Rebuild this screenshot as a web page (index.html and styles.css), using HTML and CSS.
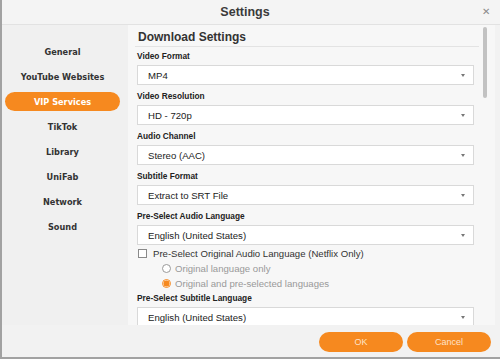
FILE: index.html
```html
<!DOCTYPE html>
<html>
<head>
<meta charset="utf-8">
<link rel="stylesheet" href="styles.css">
</head>
<body>
<div class="window">
  <div class="titlebar">
    <span class="title">Settings</span>
    <span class="close">&#x2715;</span>
  </div>
  <div class="main">
    <nav class="sidebar">
      <div class="nav-item">General</div>
      <div class="nav-item">YouTube Websites</div>
      <div class="nav-item active">VIP Services</div>
      <div class="nav-item">TikTok</div>
      <div class="nav-item">Library</div>
      <div class="nav-item">UniFab</div>
      <div class="nav-item">Network</div>
      <div class="nav-item">Sound</div>
    </nav>
    <section class="panel">
      <div class="scroll">
        <h2 class="heading">Download Settings</h2>
        <div class="label">Video Format</div>
        <div class="select"><span>MP4</span><i class="arrow"></i></div>
        <div class="label">Video Resolution</div>
        <div class="select"><span>HD - 720p</span><i class="arrow"></i></div>
        <div class="label">Audio Channel</div>
        <div class="select"><span>Stereo (AAC)</span><i class="arrow"></i></div>
        <div class="label">Subtitle Format</div>
        <div class="select"><span>Extract to SRT File</span><i class="arrow"></i></div>
        <div class="label">Pre-Select Audio Language</div>
        <div class="select"><span>English (United States)</span><i class="arrow"></i></div>
        <div class="check-row"><span class="checkbox"></span><span>Pre-Select Original Audio Language (Netflix Only)</span></div>
        <div class="radio-row"><span class="radio"></span><span>Original language only</span></div>
        <div class="radio-row"><span class="radio on"></span><span>Original and pre-selected languages</span></div>
        <div class="label after-radio">Pre-Select Subtitle Language</div>
        <div class="select"><span>English (United States)</span><i class="arrow"></i></div>
      </div>
      <div class="scrollbar"><div class="thumb"></div></div>
    </section>
  </div>
  <div class="footer">
    <button class="btn">OK</button>
    <button class="btn">Cancel</button>
  </div>
</div>
</body>
</html>
```
FILE: styles.css
```css
* { box-sizing: border-box; }
html, body { margin: 0; padding: 0; }
body {
  width: 500px;
  height: 359px;
  overflow: hidden;
  font-family: "Liberation Sans", Arial, sans-serif;
  color: #333;
  background: #f3f3f3;
}
.window {
  width: 500px;
  height: 359px;
  border-left: 2px solid #a2a2a2;
  border-bottom: 2px solid #a2a2a2;
  display: flex;
  flex-direction: column;
  background: #f2f2f2;
}
.titlebar {
  height: 25px;
  flex: none;
  display: flex;
  align-items: center;
  justify-content: center;
  position: relative;
  border-bottom: 1px solid #e2e2e2;
  background: #f4f4f4;
}
.title {
  font-size: 12.5px;
  font-weight: bold;
  color: #3a3a3a;
  margin-left: -12px;
}
.close {
  position: absolute;
  right: 10px;
  top: 6px;
  font-size: 10px;
  color: #8a8a8a;
}
.main {
  flex: none;
  height: 300px;
  display: flex;
}
.sidebar {
  width: 126px;
  flex: none;
  background: #f0f0f0;
  padding-top: 14px;
  display: flex;
  flex-direction: column;
  align-items: stretch;
  padding-left: 3px;
  padding-right: 8px;
}
.nav-item {
  height: 25px;
  display: flex;
  align-items: center;
  justify-content: center;
  font-family: "DejaVu Sans", Verdana, sans-serif;
  font-weight: bold;
  font-size: 8.2px;
  color: #333;
}
.nav-item.active {
  background: #f6891f;
  color: #fff;
  border-radius: 10px;
  height: 19px;
  margin: 3px 0;
}
.panel {
  flex: 1;
  display: flex;
  background: #f7f7f7;
  margin-right: 5px;
  overflow: hidden;
}
.scroll {
  flex: 1;
  padding: 5px 9px 0 9px;
  overflow: hidden;
}
.heading {
  margin: 0 -5px 0 -2px;
  font-size: 12px;
  font-weight: bold;
  color: #333;
  padding: 0 0 2px 3px;
  border-bottom: 1px solid #e3e3e3;
}
.label {
  font-size: 8.3px;
  font-weight: bold;
  color: #222;
  height: 18px;
  display: flex;
  align-items: center;
  margin-top: 2px;
}
.heading + .label { margin-top: 0; }
.label.after-radio { margin-top: -2px; }
.select {
  height: 20px;
  background: #fff;
  border: 1px solid #d9d9d9;
  display: flex;
  align-items: center;
  justify-content: space-between;
  padding: 0 8px 0 10px;
  font-size: 9.6px;
  color: #222;
  margin-bottom: 1px;
}
.arrow {
  width: 0;
  height: 0;
  border-left: 2.5px solid transparent;
  border-right: 2.5px solid transparent;
  border-top: 3px solid #777;
}
.check-row {
  display: flex;
  align-items: center;
  height: 15px;
  margin-top: 1px;
  font-size: 9.6px;
  color: #333;
}
.checkbox {
  width: 9px;
  height: 9px;
  border: 1px solid #8a8a8a;
  background: #fff;
  margin: 0 6px 0 1px;
}
.radio-row {
  display: flex;
  align-items: center;
  height: 15px;
  padding-left: 25px;
  font-size: 9.6px;
  color: #999;
}
.radio {
  width: 9px;
  height: 9px;
  border-radius: 50%;
  border: 1px solid #999;
  background: #fff;
  margin-right: 4px;
}
.radio.on {
  border-color: #f6891f;
  background: radial-gradient(circle, #f6891f 0 2.8px, #fff 3.3px);
}
.scrollbar {
  width: 12px;
  flex: none;
  padding: 2px 8px 0 0;
}
.thumb {
  width: 4px;
  height: 71px;
  background: #c2c2c2;
  border-radius: 2px;
}
.footer {
  flex: 1;
  display: flex;
  justify-content: flex-end;
  align-items: flex-start;
  padding-top: 7px;
  padding-right: 9px;
  gap: 4px;
  background: #f2f2f2;
}
.btn {
  width: 84px;
  height: 20px;
  border: none;
  border-radius: 10px;
  background: #f6891f;
  color: #fde3c9;
  font-family: "Liberation Sans", Arial, sans-serif;
  font-size: 9px;
  padding: 0;
}
```
